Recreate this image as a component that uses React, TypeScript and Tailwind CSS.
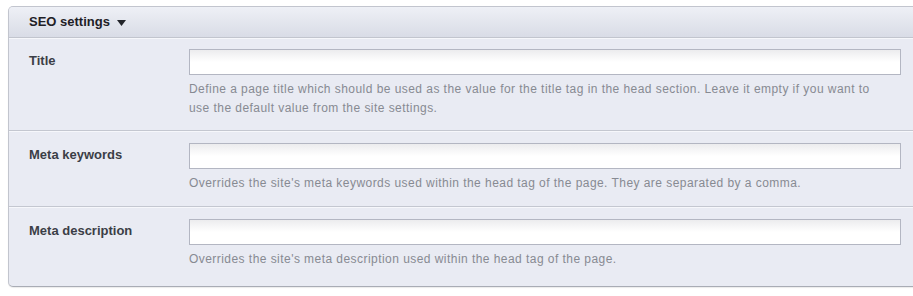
import { useState } from "react";

type Field = {
  label: string;
  help: string;
  pad: string;
};

const fields: Field[] = [
  {
    label: "Title",
    help: "Define a page title which should be used as the value for the title tag in the head section. Leave it empty if you want to use the default value from the site settings.",
    pad: "pt-[10px] pb-[12px] border-b border-b-[#c4c7d0]",
  },
  {
    label: "Meta keywords",
    help: "Overrides the site's meta keywords used within the head tag of the page. They are separated by a comma.",
    pad: "pt-[11px] pb-[13px] border-b border-b-[#c4c7d0]",
  },
  {
    label: "Meta description",
    help: "Overrides the site's meta description used within the head tag of the page.",
    pad: "pt-[11px] pb-[17px]",
  },
];

export default function App() {
  const [values, setValues] = useState<string[]>(["", "", ""]);

  return (
    <div
      className="w-[913px] h-[296px] overflow-hidden bg-white pt-[6px]"
      style={{ fontFamily: '"Liberation Sans", Arial, sans-serif' }}
    >
      <div className="ml-2 w-[930px] rounded-[5px] border border-[#c2c5ce] border-b-[#a9acb5] bg-[#e9ebf3] shadow-[0_1px_1px_rgba(0,0,0,0.08)] overflow-hidden">
        <div className="flex items-center h-[31px] px-5 bg-gradient-to-b from-[#eef0f6] to-[#d9dce6] border-b border-[#c2c5ce]">
          <span className="text-[13px] font-bold text-[#1e2026]">SEO settings</span>
          <svg className="ml-[7px] mt-[1px]" width="9" height="6" viewBox="0 0 9 6">
            <path d="M0 0 L9 0 L4.5 6 Z" fill="#22242a" />
          </svg>
        </div>
        {fields.map((f, i) => (
          <div
            key={f.label}
            className={"flex px-5 border-t border-t-[#f6f7fb] " + f.pad}
          >
            <label className="w-[160px] shrink-0 pt-[2px] text-[13px] font-bold text-[#3b3e46]">
              {f.label}
            </label>
            <div className="w-[712px]">
              <input
                type="text"
                value={values[i]}
                onChange={(e) => {
                  const next = [...values];
                  next[i] = e.target.value;
                  setValues(next);
                }}
                className="block w-[712px] h-[26px] border border-[#b3b6c2] bg-gradient-to-b from-[#ececee] via-white to-white px-1 text-[12px] outline-none"
              />
              <p className="mt-[5px] max-w-[700px] text-[12px] leading-[19px] tracking-[0.45px] text-[#878a92]">
                {f.help}
              </p>
            </div>
          </div>
        ))}
      </div>
    </div>
  );
}
